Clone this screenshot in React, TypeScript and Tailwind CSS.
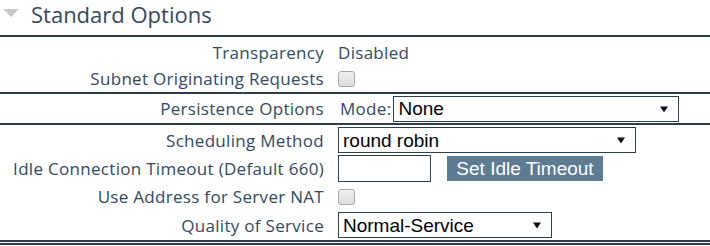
import React from "react";

const lbl = "w-[324px] shrink-0 text-right pr-0";

function Select({ w, text }: { w: string; text: string }) {
  return (
    <div className={`${w} h-[26px] border border-[#2c3e50] flex items-center justify-between pl-[4px] pr-[10px] bg-white`}>
      <span className="font-['Liberation_Sans',Arial,sans-serif] text-[19px] leading-none tracking-normal text-black">{text}</span>
      <svg width="8" height="8" viewBox="0 0 8 8"><path d="M0 1.5 L8 1.5 L4 7.5 Z" fill="#111" /></svg>
    </div>
  );
}

function Check() {
  return (
    <div className="w-[17px] h-[16px] rounded-[3px] border border-[#a8a8a8] bg-gradient-to-b from-[#f0f0f0] to-[#dcdcdc]" />
  );
}

function Row({ label, h, children }: { label: string; h: string; children: React.ReactNode }) {
  return (
    <div className={`flex items-center ${h}`}>
      <div className={lbl}>{label}</div>
      <div className="ml-[14px] flex items-center">{children}</div>
    </div>
  );
}

export default function App() {
  return (
    <div className="w-[710px] h-[246px] bg-white font-['Open_Sans',sans-serif] text-[#34495e] overflow-hidden">
      <div className="h-[37px] border-b-2 border-[#2c3e50] flex items-start">
        <svg className="ml-[3px] mt-[9px]" width="16" height="9" viewBox="0 0 16 9"><path d="M0 0 L16 0 L8 8 Z" fill="#c8c8c8" /></svg>
        <span className="ml-[12px] mt-[-1px] text-[22px] leading-[30px]">Standard Options</span>
      </div>
      <div className="text-[17px] leading-none tracking-[0.3px]">
        <div className="border-b-2 border-[#2c3e50]">
          <Row label="Transparency" h="h-[28px] pt-[2px]">
            <span>Disabled</span>
          </Row>
          <Row label="Subnet Originating Requests" h="h-[27px]">
            <Check />
          </Row>
        </div>
        <div className="border-b-2 border-[#2c3e50]">
          <div className="flex items-center h-[29px]">
            <div className={lbl}>Persistence Options</div>
            <div className="ml-[16px] flex items-center">
              <span className="mr-[2px]">Mode:</span>
              <Select w="w-[286px]" text="None" />
            </div>
          </div>
        </div>
        <div className="border-b-[5px] border-double border-[#2c3e50] pt-[1px]">
          <Row label="Scheduling Method" h="h-[28px]">
            <Select w="w-[298px]" text="round robin" />
          </Row>
          <Row label="Idle Connection Timeout (Default 660)" h="h-[29px]">
            <div className="w-[93px] h-[27px] border border-[#2c3e50] bg-white" />
            <div className="ml-[16px] w-[156px] h-[25px] bg-[#5d7b91] text-white font-['Liberation_Sans',Arial,sans-serif] text-[19px] leading-none tracking-normal flex items-center justify-center">
              Set Idle Timeout
            </div>
          </Row>
          <Row label="Use Address for Server NAT" h="h-[27px]">
            <Check />
          </Row>
          <Row label="Quality of Service" h="h-[30px]">
            <Select w="w-[214px]" text="Normal-Service" />
          </Row>
        </div>
      </div>
    </div>
  );
}
